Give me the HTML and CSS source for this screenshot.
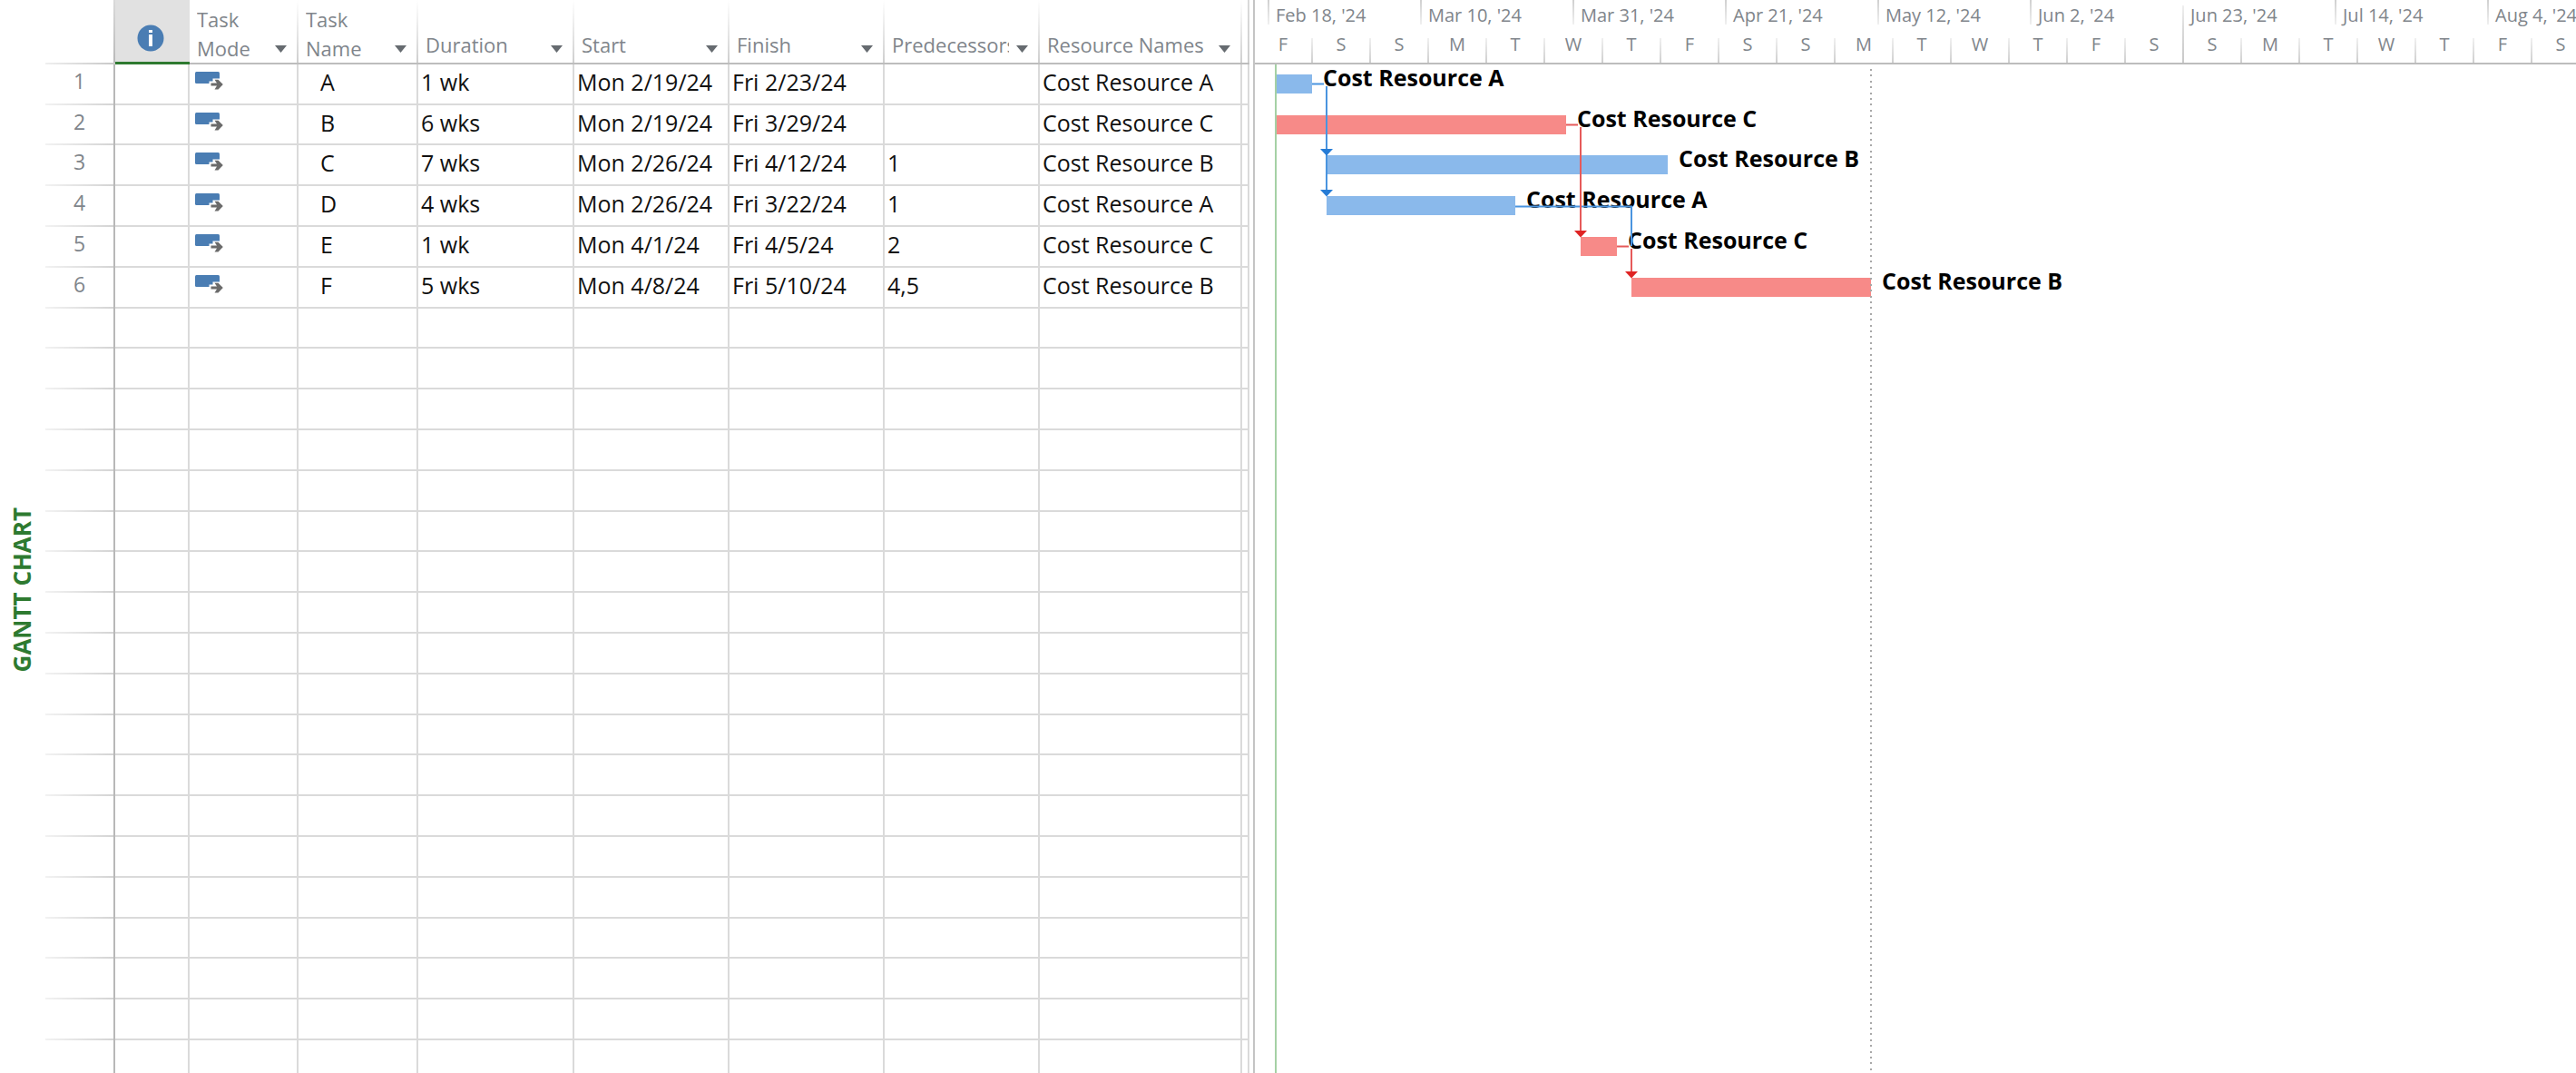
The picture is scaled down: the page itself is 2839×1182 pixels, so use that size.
FILE: index.html
```html
<!DOCTYPE html>
<html lang="en">
<head>
<meta charset="utf-8">
<title>Gantt Chart</title>
<link rel="stylesheet" href="styles.css">
</head>
<body>
<svg width="0" height="0" class="defs" aria-hidden="true">
  <symbol id="auto" viewBox="0 0 31 20">
    <rect x="0" y="0" width="27" height="13" rx="1.5" fill="#4a7db3"/>
    <path d="M15.500 13V10.500H19.500V7.500H27V13Z" fill="#fff"/>
    <path d="M17.500 12.600H24L21.500 8.800H25.500L30.800 14.100L25.500 19.400H21.500L24 15.600H17.500Z" fill="#6b6b6b"/>
  </symbol>
</svg>
<main class="app">
  <aside class="view-bar"><h1 class="view-name">GANTT CHART</h1></aside>
  <section class="sheet" aria-label="Task sheet">
    <table class="grid">
      <colgroup>
        <col class="c-num"><col class="c-info"><col class="c-mode"><col class="c-name"><col class="c-dur">
        <col class="c-date"><col class="c-date"><col class="c-date"><col class="c-res"><col class="c-end">
      </colgroup>
      <thead>
        <tr>
          <td class="corner"></td>
          <th scope="col" class="info" aria-label="Indicators">
            <svg class="info-icon" viewBox="0 0 30 30" aria-hidden="true">
              <circle cx="15" cy="15" r="14.500" fill="#4a7db3"/>
              <rect x="13" y="6" width="4" height="3" fill="#fff"/>
              <rect x="13" y="11" width="4" height="13" fill="#fff"/>
            </svg>
          </th>
          <th scope="col"><div class="head two"><span>Task<br>Mode</span><button class="drop" aria-label="Task Mode options"></button></div></th>
          <th scope="col"><div class="head two"><span>Task<br>Name</span><button class="drop" aria-label="Task Name options"></button></div></th>
          <th scope="col"><div class="head"><span>Duration</span><button class="drop" aria-label="Duration options"></button></div></th>
          <th scope="col"><div class="head"><span>Start</span><button class="drop" aria-label="Start options"></button></div></th>
          <th scope="col"><div class="head"><span>Finish</span><button class="drop" aria-label="Finish options"></button></div></th>
          <th scope="col"><div class="head"><span>Predecessors</span><button class="drop" aria-label="Predecessors options"></button></div></th>
          <th scope="col"><div class="head"><span>Resource Names</span><button class="drop" aria-label="Resource Names options"></button></div></th>
          <td></td>
        </tr>
      </thead>
      <tbody>
        <tr><th scope="row">1</th><td></td><td class="mode"><svg class="mode-icon"><use href="#auto"/></svg></td><td class="name">A</td><td>1 wk</td><td>Mon 2/19/24</td><td>Fri 2/23/24</td><td></td><td>Cost Resource A</td><td></td></tr>
        <tr><th scope="row">2</th><td></td><td class="mode"><svg class="mode-icon"><use href="#auto"/></svg></td><td class="name">B</td><td>6 wks</td><td>Mon 2/19/24</td><td>Fri 3/29/24</td><td></td><td>Cost Resource C</td><td></td></tr>
        <tr><th scope="row">3</th><td></td><td class="mode"><svg class="mode-icon"><use href="#auto"/></svg></td><td class="name">C</td><td>7 wks</td><td>Mon 2/26/24</td><td>Fri 4/12/24</td><td>1</td><td>Cost Resource B</td><td></td></tr>
        <tr><th scope="row">4</th><td></td><td class="mode"><svg class="mode-icon"><use href="#auto"/></svg></td><td class="name">D</td><td>4 wks</td><td>Mon 2/26/24</td><td>Fri 3/22/24</td><td>1</td><td>Cost Resource A</td><td></td></tr>
        <tr><th scope="row">5</th><td></td><td class="mode"><svg class="mode-icon"><use href="#auto"/></svg></td><td class="name">E</td><td>1 wk</td><td>Mon 4/1/24</td><td>Fri 4/5/24</td><td>2</td><td>Cost Resource C</td><td></td></tr>
        <tr><th scope="row">6</th><td></td><td class="mode"><svg class="mode-icon"><use href="#auto"/></svg></td><td class="name">F</td><td>5 wks</td><td>Mon 4/8/24</td><td>Fri 5/10/24</td><td>4,5</td><td>Cost Resource B</td><td></td></tr>
        <tr><th></th><td></td><td></td><td></td><td></td><td></td><td></td><td></td><td></td><td></td></tr>
        <tr><th></th><td></td><td></td><td></td><td></td><td></td><td></td><td></td><td></td><td></td></tr>
        <tr><th></th><td></td><td></td><td></td><td></td><td></td><td></td><td></td><td></td><td></td></tr>
        <tr><th></th><td></td><td></td><td></td><td></td><td></td><td></td><td></td><td></td><td></td></tr>
        <tr><th></th><td></td><td></td><td></td><td></td><td></td><td></td><td></td><td></td><td></td></tr>
        <tr><th></th><td></td><td></td><td></td><td></td><td></td><td></td><td></td><td></td><td></td></tr>
        <tr><th></th><td></td><td></td><td></td><td></td><td></td><td></td><td></td><td></td><td></td></tr>
        <tr><th></th><td></td><td></td><td></td><td></td><td></td><td></td><td></td><td></td><td></td></tr>
        <tr><th></th><td></td><td></td><td></td><td></td><td></td><td></td><td></td><td></td><td></td></tr>
        <tr><th></th><td></td><td></td><td></td><td></td><td></td><td></td><td></td><td></td><td></td></tr>
        <tr><th></th><td></td><td></td><td></td><td></td><td></td><td></td><td></td><td></td><td></td></tr>
        <tr><th></th><td></td><td></td><td></td><td></td><td></td><td></td><td></td><td></td><td></td></tr>
        <tr><th></th><td></td><td></td><td></td><td></td><td></td><td></td><td></td><td></td><td></td></tr>
        <tr><th></th><td></td><td></td><td></td><td></td><td></td><td></td><td></td><td></td><td></td></tr>
        <tr><th></th><td></td><td></td><td></td><td></td><td></td><td></td><td></td><td></td><td></td></tr>
        <tr><th></th><td></td><td></td><td></td><td></td><td></td><td></td><td></td><td></td><td></td></tr>
        <tr><th></th><td></td><td></td><td></td><td></td><td></td><td></td><td></td><td></td><td></td></tr>
        <tr><th></th><td></td><td></td><td></td><td></td><td></td><td></td><td></td><td></td><td></td></tr>
        <tr><th></th><td></td><td></td><td></td><td></td><td></td><td></td><td></td><td></td><td></td></tr>
      </tbody>
    </table>
  </section>
  <section class="chart" aria-label="Timeline">
    <header class="scale">
      <ol class="major">
        <li>Feb 18, '24</li><li>Mar 10, '24</li><li>Mar 31, '24</li><li>Apr 21, '24</li><li>May 12, '24</li><li>Jun 2, '24</li><li class="joined">Jun 23, '24</li><li>Jul 14, '24</li><li>Aug 4, '24</li>
      </ol>
      <ol class="minor">
        <li>F</li><li>S</li><li>S</li><li>M</li><li>T</li><li>W</li><li>T</li><li>F</li><li>S</li><li>S</li><li>M</li><li>T</li><li>W</li><li>T</li><li>F</li><li>S</li><li class="joined">S</li><li>M</li><li>T</li><li>W</li><li>T</li><li>F</li><li>S</li>
      </ol>
    </header>
    <div class="canvas">
      <ol class="tasks">
        <li><span class="bar" style="--start:1;--days:5"></span><span class="label">Cost Resource A</span></li>
        <li><span class="bar critical" style="--start:1;--days:40"></span><span class="label">Cost Resource C</span></li>
        <li><span class="bar" style="--start:8;--days:47"></span><span class="label">Cost Resource B</span></li>
        <li><span class="bar" style="--start:8;--days:26"></span><span class="label">Cost Resource A</span></li>
        <li><span class="bar critical" style="--start:43;--days:5"></span><span class="label">Cost Resource C</span></li>
        <li><span class="bar critical" style="--start:50;--days:33"></span><span class="label">Cost Resource B</span></li>
      </ol>
      <div class="marker start" style="--day:1"></div>
      <div class="marker finish" style="--day:83"></div>
      <svg class="links" width="700" height="270" aria-hidden="true">
        <g class="link">
          <path d="M63 21.500H76M79 24V138M287 156.500H415V200"/>
          <path class="tip" d="M72 93H86L79 100.500ZM72 138H86L79 145.500Z"/>
        </g>
        <g class="link critical">
          <path d="M343 66.500H356M359 69V183M399 200.500H412M415 203V228"/>
          <path class="tip" d="M352 183H366L359 190.500ZM408 228H422L415 235.500Z"/>
        </g>
      </svg>
    </div>
  </section>
</main>
</body>
</html>
```
FILE: styles.css
```css
* { box-sizing: border-box; }

:root {
  --line: #dadada;
  --rule: #bdbdbd;
  --muted: #80858b;
  --day-width: 8px;
  --origin: 15px;
}

body {
  margin: 0;
  background: #fff;
  color: #111;
  font: 25px/38px "Open Sans", "Noto Sans", sans-serif;
}

ol { list-style: none; margin: 0; padding: 0; }

.defs { position: absolute; }

.app {
  display: flex;
  height: 100vh;
  overflow: hidden;
}

.view-bar {
  flex: none;
  width: 50px;
  padding: 118px 7px 0;
  display: flex;
  align-items: center;
}

.view-name {
  margin: 0;
  writing-mode: vertical-rl;
  transform: rotate(180deg);
  font-size: 26px;
  line-height: 34px;
  font-weight: 700;
  color: #2e7a30;
  white-space: nowrap;
}

/* Task sheet */
.sheet {
  flex: none;
  margin-right: 4px;
  background: linear-gradient(var(--line), var(--line)) right / 2px 100% no-repeat;
}

.grid {
  table-layout: fixed;
  width: 1327px;
  border-collapse: separate;
  border-spacing: 0;
}

.c-num { width: 77px; }
.c-info { width: 82px; }
.c-mode { width: 120px; }
.c-name { width: 132px; }
.c-dur { width: 172px; }
.c-date { width: 171px; }
.c-res { width: 223px; }
.c-end { width: 8px; }

.grid td,
.grid th { padding: 0; text-align: left; font-weight: 400; }

.grid thead td,
.grid thead th {
  height: 71px;
  vertical-align: bottom;
  border-bottom: 2px solid var(--rule);
  background: linear-gradient(transparent, #cfcfcf) right / 2px 100% no-repeat;
}

.grid thead .corner {
  border-bottom: 0;
  background:
    linear-gradient(90deg, #efefef, #c8c8c8) bottom / 100% 2px no-repeat,
    linear-gradient(#dadada, #b8b8b8) right / 2px 100% no-repeat;
}

.grid thead .info {
  background: #e1e1e1;
  border-bottom: 3px solid #2e7a30;
  vertical-align: middle;
}

.info-icon { display: block; width: 30px; height: 30px; margin: 16px 0 0 24px; }

.head {
  display: flex;
  align-items: flex-end;
  gap: 8px;
  padding: 0 13px 4px 8px;
  font-size: 22px;
  line-height: 32px;
  color: var(--muted);
}

.head.two { padding-bottom: 0; }
.head span { flex: 1; min-width: 0; overflow: hidden; white-space: nowrap; }

.drop {
  flex: none;
  width: 13px;
  height: 8px;
  margin-bottom: 7px;
  padding: 0;
  border: 0;
  background: #666b70;
  clip-path: polygon(0 0, 100% 0, 50% 100%);
}

.head.two .drop { margin-bottom: 11px; }

.grid tbody tr { height: 45px; }
.grid tbody tr:nth-child(5n+2) { height: 44px; }

.grid tbody td {
  padding-left: 3px;
  vertical-align: top;
  white-space: nowrap;
  border-right: 2px solid var(--line);
  border-bottom: 2px solid var(--line);
}

.grid tbody th {
  vertical-align: top;
  text-align: center;
  font-size: 23px;
  line-height: 36px;
  color: var(--muted);
  border-right: 2px solid #b8b8b8;
  background: linear-gradient(90deg, #f2f2f2, #d4d4d4) bottom / 100% 2px no-repeat;
}

.grid tbody .name { padding-left: 24px; }
.grid tbody .mode { padding: 8px 0 0 6px; }
.mode-icon { display: block; width: 31px; height: 20px; }

/* Timeline */
.chart {
  flex: 1;
  min-width: 0;
  display: flex;
  flex-direction: column;
  overflow: hidden;
  border-left: 2px solid #c4c4c4;
}

.scale {
  flex: none;
  border-bottom: 2px solid var(--rule);
  font-size: 20px;
  line-height: 34px;
  color: var(--muted);
  white-space: nowrap;
}

.major,
.minor { display: flex; }

.major { height: 32px; padding-left: 14px; }
.major li {
  flex: none;
  width: 168px;
  padding-left: 9px;
  background: linear-gradient(#d0d0d0, #f0f0f0) left top / 2px 27px no-repeat;
}
.major .joined { background: linear-gradient(#f0f0f0, #dadada) left bottom / 2px 26px no-repeat; }

.minor { height: 37px; }
.minor li {
  flex: none;
  width: 64px;
  padding-left: 2px;
  text-align: center;
  background: linear-gradient(#f0f0f0, #cfcfcf) left bottom / 2px 27px no-repeat;
}
.minor li:first-child { width: 62px; padding-left: 0; background: none; }
.minor .joined { background: linear-gradient(#dadada, #c8c8c8) left bottom / 2px 100% no-repeat; }

.canvas { position: relative; flex: 1; }

.tasks li { display: flex; height: 45px; gap: 12px; }
.tasks li:nth-child(5n+2) { height: 44px; }

.bar {
  flex: none;
  width: calc(var(--days) * var(--day-width));
  height: 21px;
  margin: 11px 0 0 calc(var(--origin) + var(--start) * var(--day-width));
  background: #8ab9eb;
}
.bar.critical { background: #f78a88; }

.label {
  line-height: 28px;
  font-weight: 700;
  color: #000;
  white-space: nowrap;
}

.marker {
  position: absolute;
  top: 0;
  bottom: 0;
  left: calc(var(--origin) - 1px + var(--day) * var(--day-width));
  width: 2px;
}
.marker.start { background: #a5d1a5; }
.marker.finish {
  top: 5px;
  background: repeating-linear-gradient(
    #a8a8a8 0 2px, transparent 2px 6px,
    #a8a8a8 6px 8px, transparent 8px 13px,
    #a8a8a8 13px 15px, transparent 15px 19px,
    #a8a8a8 19px 21px, transparent 21px 26px,
    #a8a8a8 26px 28px, transparent 28px 32px);
}

.links { position: absolute; top: 0; left: 0; }
.link { fill: none; stroke: #4a94df; stroke-width: 2; }
.link.critical { stroke: #e65a5a; }
.link .tip { fill: #267cd6; stroke: none; }
.link.critical .tip { fill: #df2424; }
```
